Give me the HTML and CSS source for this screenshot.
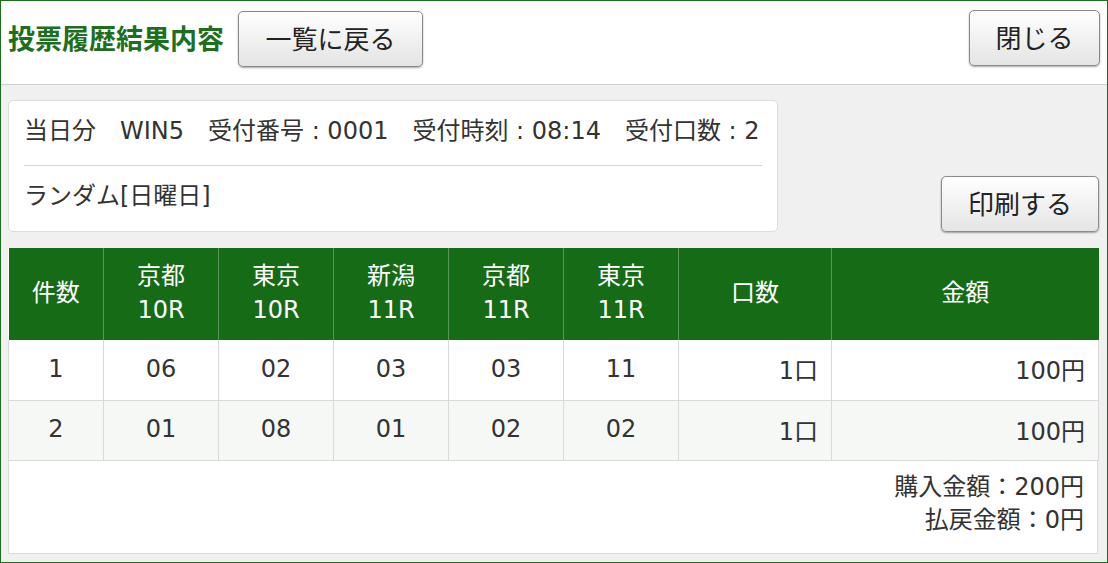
FILE: index.html
```html
<!DOCTYPE html>
<html lang="ja">
<head>
<meta charset="utf-8">
<title>投票履歴結果内容</title>
<link rel="stylesheet" href="styles.css">
</head>
<body>
<div class="page">
  <header class="topbar">
    <div class="topbar-left">
      <h1 class="title">投票履歴結果内容</h1>
      <button class="btn btn-back">一覧に戻る</button>
    </div>
    <button class="btn btn-close">閉じる</button>
  </header>
  <main class="content">
    <div class="info-row">
      <section class="info-card">
        <div class="info-line">当日分　WIN5　受付番号 : 0001　受付時刻 : 08:14　受付口数 : 2</div>
        <div class="info-line info-line-second">ランダム[日曜日]</div>
      </section>
      <button class="btn btn-print">印刷する</button>
    </div>
    <table class="result">
      <colgroup>
        <col class="c-no"><col class="c-race"><col class="c-race"><col class="c-race"><col class="c-race"><col class="c-race"><col class="c-kuchi"><col class="c-amount">
      </colgroup>
      <thead>
        <tr>
          <th>件数</th>
          <th>京都<br>10R</th>
          <th>東京<br>10R</th>
          <th>新潟<br>11R</th>
          <th>京都<br>11R</th>
          <th>東京<br>11R</th>
          <th>口数</th>
          <th>金額</th>
        </tr>
      </thead>
      <tbody>
        <tr>
          <td>1</td><td>06</td><td>02</td><td>03</td><td>03</td><td>11</td><td class="num">1口</td><td class="num">100円</td>
        </tr>
        <tr class="alt">
          <td>2</td><td>01</td><td>08</td><td>01</td><td>02</td><td>02</td><td class="num">1口</td><td class="num">100円</td>
        </tr>
      </tbody>
    </table>
    <section class="summary">
      <div class="summary-line">購入金額：200円</div>
      <div class="summary-line">払戻金額：0円</div>
    </section>
  </main>
</div>
</body>
</html>
```

FILE: styles.css
```css
* { box-sizing: border-box; }
html, body { margin: 0; padding: 0; }
body {
  font-family: "DejaVu Sans", "Noto Sans CJK JP", sans-serif;
  color: #333;
  width: 1108px;
  height: 563px;
  overflow: hidden;
}
.page {
  width: 1108px;
  height: 563px;
  border: 1px solid #1d6e1d;
  display: flex;
  flex-direction: column;
  background: #f0f0f0;
}
.topbar {
  height: 84px;
  flex: none;
  background: #fff;
  border-bottom: 1px solid #d0d0d0;
  display: flex;
  align-items: flex-start;
  justify-content: space-between;
  padding: 9px 7px 0 7px;
}
.topbar-left {
  display: flex;
  align-items: center;
  gap: 14px;
}
.title {
  margin: 0;
  font-family: "Noto Sans CJK JP", sans-serif;
  font-size: 27px;
  font-weight: bold;
  color: #1d6e1d;
  line-height: 56px;
  padding-bottom: 2px;
}
.btn {
  font-family: "Noto Sans CJK JP", sans-serif;
  font-size: 26px;
  color: #222;
  height: 56px;
  background: linear-gradient(#ffffff, #e4e4e4);
  border: 1px solid #8a8a8a;
  border-radius: 5px;
  box-shadow: 0 1px 2px rgba(0,0,0,0.35);
  padding: 0 0 3px 0;
  line-height: 1;
}
.btn-back { width: 185px; }
.btn-close { width: 131px; }
.btn-print { width: 158px; }
.content {
  flex: 1;
  padding: 15px 9px 0 7px;
}
.info-row {
  display: flex;
  justify-content: space-between;
  align-items: flex-end;
  margin-right: -1px;
}
.info-card {
  width: 770px;
  height: 132px;
  background: #fff;
  border: 1px solid #dcdcdc;
  border-radius: 5px;
  padding: 0 15px;
}
.info-line {
  font-size: 24px;
  height: 64px;
  line-height: 60px;
  white-space: nowrap;
}
.info-line-second {
  border-top: 1px solid #d4d4d4;
  height: 62px;
  line-height: 60px;
}
.result {
  margin-top: 16px;
  width: 1090px;
  border-collapse: collapse;
  table-layout: fixed;
  font-size: 24px;
  background: #fff;
}
.c-no { width: 95px; }
.c-race { width: 115px; }
.c-kuchi { width: 153px; }
.c-amount { width: 267px; }
.result th {
  background: #166b16;
  color: #fff;
  font-weight: normal;
  height: 92px;
  line-height: 34px;
  padding: 0 0 2px 0;
  border-left: 1px solid #5c945c;
  text-align: center;
}
.result th:first-child { border-left: none; }
.result td {
  height: 60px;
  padding: 0 0 2px 0;
  text-align: center;
  border: 1px solid #dadada;
  border-top: none;
  color: #333;
}
.result td:first-child { border-left: 1px solid #dadada; }
.result td.num {
  text-align: right;
  padding-right: 13px;
}
.result tr.alt td { background: #f5f8f5; }
.summary {
  width: 1090px;
  height: 93px;
  background: #fff;
  border: 1px solid #dadada;
  border-top: none;
  text-align: right;
  font-size: 24px;
  padding: 10px 13px 0 0;
}
.summary-line {
  height: 33px;
  line-height: 33px;
}
```
